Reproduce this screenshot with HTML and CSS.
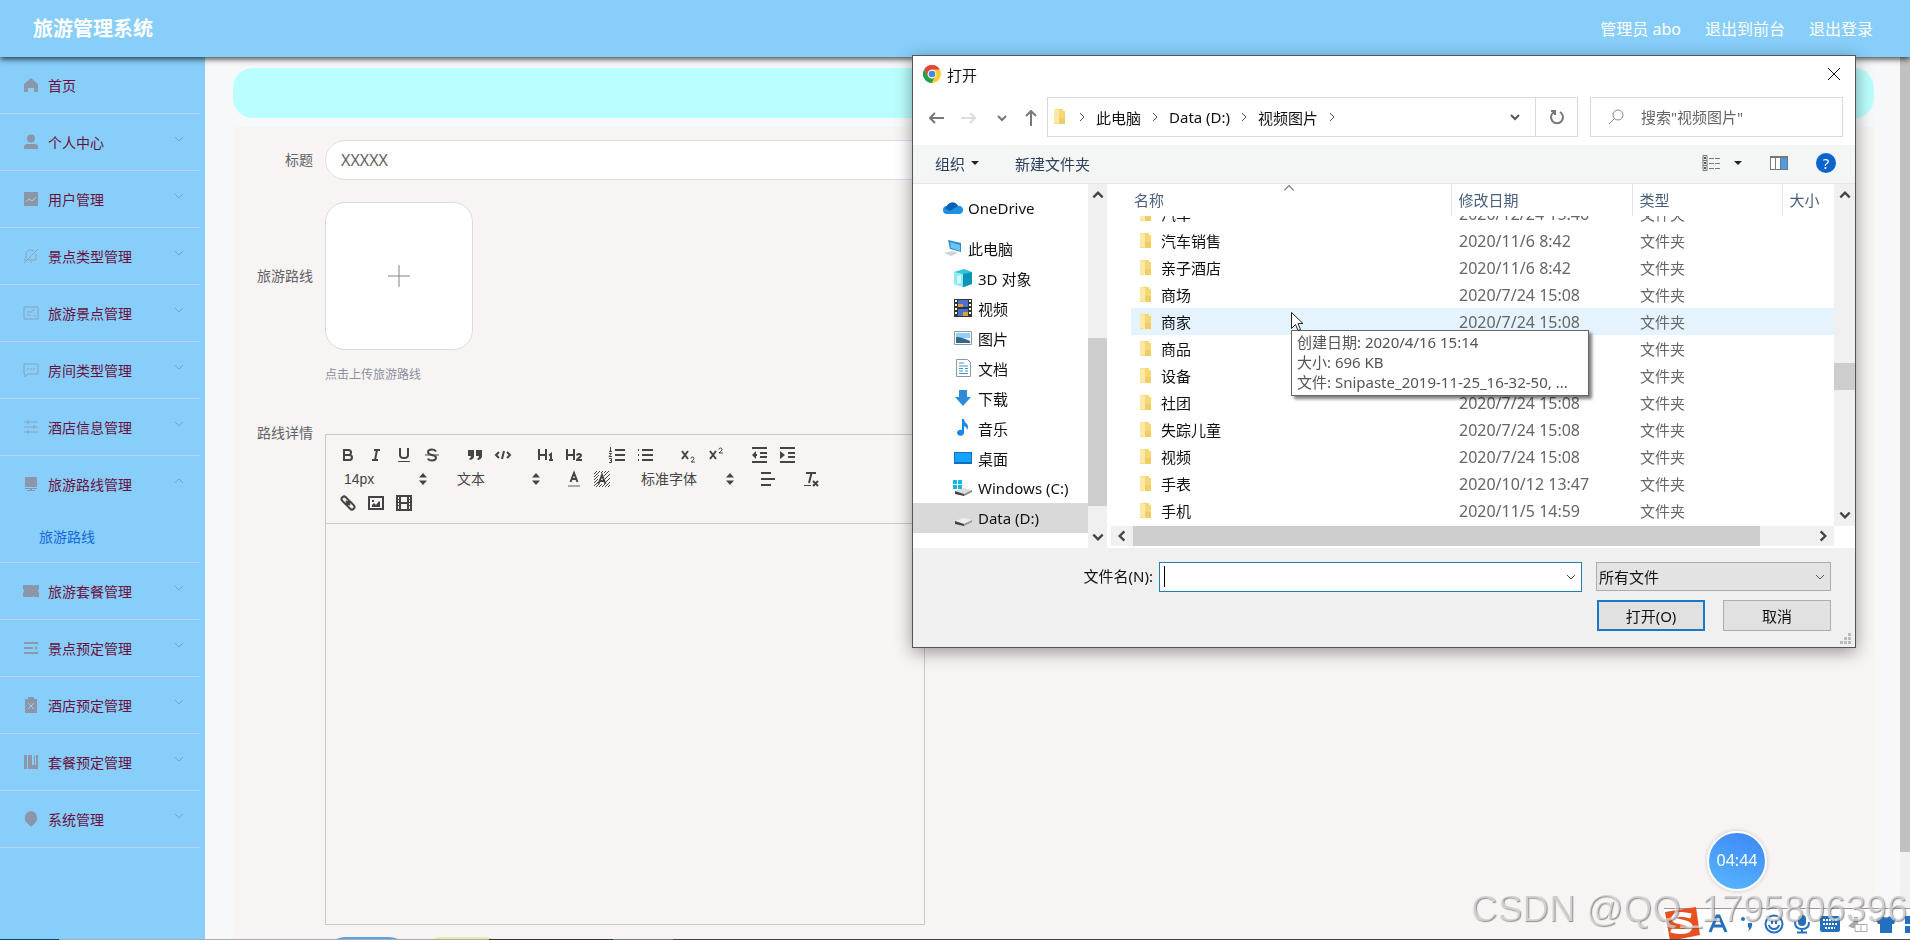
FILE: index.html
```html
<!DOCTYPE html>
<html lang="zh-CN">
<head>
<meta charset="utf-8">
<title>旅游管理系统</title>
<link rel="stylesheet" href="styles.css">
</head>
<body>
<svg class="defs" aria-hidden="true">
  <symbol id="down" viewBox="0 0 12 12"><path d="M2 4l4 4 4-4" fill="none" stroke="currentColor"/></symbol>
  <symbol id="up" viewBox="0 0 12 12"><path d="M2 8l4-4 4 4" fill="none" stroke="currentColor"/></symbol>
  <symbol id="right" viewBox="0 0 12 12"><path d="M4 2l4 4-4 4" fill="none" stroke="currentColor"/></symbol>
  <symbol id="left" viewBox="0 0 12 12"><path d="M8 2L4 6l4 4" fill="none" stroke="currentColor"/></symbol>
  <symbol id="picker" viewBox="0 0 18 18"><path d="M5 7.500L9 3l4 4.500z M5 10.500L9 15l4-4.500z" fill="#444"/></symbol>
  <symbol id="folder" viewBox="0 0 13 18"><path d="M1 1h9v2h2v13H1z" fill="#f7d774"/><path d="M1 1l5 1v14l-5-1z" fill="#fbe9a9"/><path d="M6 10h6v6H6z" fill="#f1cd66"/></symbol>
</svg>

<header class="topbar">
  <h1 class="brand">旅游管理系统</h1>
  <nav class="account"><span>管理员 abo</span><a href="#">退出到前台</a><a href="#">退出登录</a></nav>
</header>

<div class="shell">
  <aside class="sidebar">
    <ul class="menu">
      <li><a href="#"><svg class="mi" viewBox="0 0 16 16"><path d="M8 1l7 6v8h-4v-4H5v4H1V7z"/></svg>首页</a></li>
      <li><a href="#"><svg class="mi" viewBox="0 0 16 16"><circle cx="8" cy="4.500" r="4"/><path d="M1 15v-2q0-3 3-3h8q3 0 3 3v2z"/></svg>个人中心<svg class="arr"><use href="#down"/></svg></a></li>
      <li><a href="#"><svg class="mi" viewBox="0 0 16 16"><path d="M1 1h14v14H1z"/><path class="cut" d="M3 11l3-3 3 2 4-4"/></svg>用户管理<svg class="arr"><use href="#down"/></svg></a></li>
      <li><a href="#"><svg class="mi line" viewBox="0 0 16 16"><path d="M1 15L15 1M3 11V7q0-5 5-5 2 0 3 1M13 6v6H5M1 12h2M7 14h2"/></svg>景点类型管理<svg class="arr"><use href="#down"/></svg></a></li>
      <li><a href="#"><svg class="mi line" viewBox="0 0 16 16"><path d="M1 2h14v12H1zM4 7h5M4 10h4M9 6l3-2M11 11h2"/></svg>旅游景点管理<svg class="arr"><use href="#down"/></svg></a></li>
      <li><a href="#"><svg class="mi line" viewBox="0 0 16 16"><path d="M1 2h14v10H5l-3 3v-3H1zM4 7h2M7 7h2M10 7h2"/></svg>房间类型管理<svg class="arr"><use href="#down"/></svg></a></li>
      <li><a href="#"><svg class="mi line" viewBox="0 0 16 16"><path d="M1 3h14M1 8h14M1 13h14M5 1v4M11 6v4M5 11v4"/></svg>酒店信息管理<svg class="arr"><use href="#down"/></svg></a></li>
      <li><a href="#"><svg class="mi" viewBox="0 0 16 16"><path d="M2 1h12v10H2zM2 12h12v1H9v1h3v1H4v-1h3v-1H2z"/></svg>旅游路线管理<svg class="arr"><use href="#up"/></svg></a>
        <a class="sub" href="#">旅游路线</a></li>
      <li><a href="#"><svg class="mi" viewBox="0 0 16 16"><path d="M0 2h10v1h1V2h5v4q-2 2 0 4v4h-5v-1h-1v1H0v-4q2-2 0-4z"/></svg>旅游套餐管理<svg class="arr"><use href="#down"/></svg></a></li>
      <li><a href="#"><svg class="mi" viewBox="0 0 16 16"><path d="M1 2h14v2H1zM1 7h9v2H1zM1 12h14v2H1zM12 6l3 2-3 2z"/></svg>景点预定管理<svg class="arr"><use href="#down"/></svg></a></li>
      <li><a href="#"><svg class="mi" viewBox="0 0 16 16"><path d="M2 2h3V0h6v2h3v14H2z"/><path class="cut" d="M5 6l6 6M11 6l-6 6"/></svg>酒店预定管理<svg class="arr"><use href="#down"/></svg></a></li>
      <li><a href="#"><svg class="mi" viewBox="0 0 16 16"><path d="M1 1h3v14H1zM5 1h4v10h2V2h1v9h1V1h2v14H5z"/></svg>套餐预定管理<svg class="arr"><use href="#down"/></svg></a></li>
      <li><a href="#"><svg class="mi" viewBox="0 0 16 16"><path d="M8 0a7 7 0 0 1 4 12l-4 4-4-4A7 7 0 0 1 8 0z"/></svg>系统管理<svg class="arr"><use href="#down"/></svg></a></li>
    </ul>
  </aside>

  <main class="content">
    <div class="crumb"></div>
    <form class="panel">
      <div class="field"><label for="title">标题</label><input class="text" id="title" value="XXXXX"></div>
      <div class="field upload-field"><label for="pic">旅游路线</label>
        <div><button class="upload" id="pic" type="button" aria-label="上传"><svg viewBox="0 0 24 24"><path d="M12 1v22M1 12h22" stroke="#7c828c" fill="none"/></svg></button><p class="tip">点击上传旅游路线</p></div>
      </div>
      <div class="field"><span class="label" id="detail">路线详情</span>
        <div class="editor">
          <div class="tools">
            <span class="grp">
              <button type="button" aria-label="粗体"><svg viewBox="0 0 18 18"><path class="s" d="M5 4h4.500a2.500 2.500 0 0 1 0 5H5zM5 9h5.500a2.500 2.500 0 0 1 0 5H5z"/></svg></button>
              <button type="button" aria-label="斜体"><svg viewBox="0 0 18 18"><path class="s" d="M7 4h6M5 14h6M8 14l2-10"/></svg></button>
              <button type="button" aria-label="下划线"><svg viewBox="0 0 18 18"><path class="s" d="M5 2v7c0 2 2 3 4 3s4-1 4-3V2"/><path class="f" d="M3 15h12v1H3z"/></svg></button>
              <button type="button" aria-label="删除线"><svg viewBox="0 0 18 18"><path class="s thin" d="M2 9h14"/><path class="s" d="M13 5.500C12 3.500 10.500 3.500 9 3.500c-2.500 0-4 1-4 2.700C5 8 7 8.500 9 9s4 1 4 2.800c0 1.700-1.500 2.700-4 2.700-2 0-3.500-.5-4-2"/></svg></button>
            </span>
            <span class="grp">
              <button type="button" aria-label="引用"><svg viewBox="0 0 18 18"><path class="f" d="M2 4h6v6q0 3-4 4l-1-1q2-1 2-3H2zM10 4h6v6q0 3-4 4l-1-1q2-1 2-3h-3z"/></svg></button>
              <button type="button" aria-label="代码"><svg viewBox="0 0 18 18"><path class="s" d="M5 6L2 9l3 3M13 6l3 3-3 3M10 5l-2 8"/></svg></button>
            </span>
            <span class="grp">
              <button type="button" aria-label="标题 1"><svg viewBox="0 0 18 18"><path class="s" d="M2 3v11M9 3v11M2 9h7"/><path class="s" d="M12 9.500l2-1.500v6M12 14h4"/></svg></button>
              <button type="button" aria-label="标题 2"><svg viewBox="0 0 18 18"><path class="s" d="M2 3v11M9 3v11M2 9h7M12 9.500c0-2 4-2 4 0 0 1.500-4 3-4 4.500h5"/></svg></button>
            </span>
            <span class="grp">
              <button type="button" aria-label="有序列表"><svg viewBox="0 0 18 18"><path class="s" d="M7 4h10M7 9h10M7 14h10"/><path class="s thin" d="M2.500 1v4M1 5.500h3M1 7.500h2.500L1 10.500h3M1 12.500h2.500v4H1M2 14.500h2"/></svg></button>
              <button type="button" aria-label="无序列表"><svg viewBox="0 0 18 18"><path class="s" d="M6 4h11M6 9h11M6 14h11M2 4h1M2 9h1M2 14h1"/></svg></button>
            </span>
            <span class="grp">
              <button type="button" aria-label="下标"><svg viewBox="0 0 18 18"><path class="s" d="M3 5l6 8M9 5l-6 8"/><path class="s thin" d="M12 12.500q0-1.500 1.500-1.500t1.500 1.500q0 1-3 3.500h4"/></svg></button>
              <button type="button" aria-label="上标"><svg viewBox="0 0 18 18"><path class="s" d="M3 5l6 8M9 5l-6 8"/><path class="s thin" d="M12 3.500Q12 2 13.500 2T15 3.500q0 1-3 3.500h4"/></svg></button>
            </span>
            <span class="grp">
              <button type="button" aria-label="减少缩进"><svg viewBox="0 0 18 18"><path class="s" d="M2 2h15M10 7h7M10 11h7M2 16h15M3 9h4"/><path class="f" d="M6 5v8L2 9z"/></svg></button>
              <button type="button" aria-label="增加缩进"><svg viewBox="0 0 18 18"><path class="s" d="M2 2h15M10 7h7M10 11h7M2 16h15"/><path class="f" d="M2 5v8l5-4z"/></svg></button>
            </span>
            <span class="grp pick"><select aria-label="字号"><option>14px</option></select><svg><use href="#picker"/></svg></span>
            <span class="grp pick"><select aria-label="段落"><option>文本</option></select><svg><use href="#picker"/></svg></span>
            <span class="grp">
              <button type="button" aria-label="文字颜色"><svg viewBox="0 0 18 18"><path class="s" d="M5.500 12L9 3l3.500 9M7 9h4"/><path d="M3 15h12v2H3z" fill="#aaa"/></svg></button>
              <button type="button" aria-label="背景颜色"><svg viewBox="0 0 18 18"><path class="s thin" d="M1 4l3-3M1 7l6-6M1 10l5-5M1 13l4-4M1 16l4-4M3 17l3-3M6 17l3-3M9 17l3-3M12 17l5-5M15 17l2-2M13 12l4-4M12 9l5-5M11 6l5-5M8 3l2-2M11 3l2-2"/><path class="s" d="M5.500 14L9 5l3.500 9M7 11h4"/></svg></button>
            </span>
            <span class="grp pick wide"><select aria-label="字体"><option>标准字体</option></select><svg><use href="#picker"/></svg></span>
            <span class="grp"><button type="button" aria-label="对齐"><svg viewBox="0 0 18 18"><path class="s" d="M2 3h10M2 9h14M2 15h10"/></svg></button></span>
            <span class="grp"><button type="button" aria-label="清除格式"><svg viewBox="0 0 18 18"><path class="s" d="M4 3h10M9.500 3L7 13M11 11l5 5M16 11l-5 5"/><path class="s thin" d="M2 15.500h7"/></svg></button></span>
            <span class="grp">
              <button type="button" aria-label="链接"><svg viewBox="0 0 18 18"><g class="s"><rect x="2" y="4" width="9" height="5" rx="2.500" transform="rotate(45 6.500 6.500)"/><rect x="7" y="9" width="9" height="5" rx="2.500" transform="rotate(45 11.500 11.500)"/><path d="M7 7l4 4"/></g></svg></button>
              <button type="button" aria-label="图片"><svg viewBox="0 0 18 18"><path class="s" d="M2 3h14v12H2z"/><path class="f" d="M5 13v-2l2-2 2 2 3-4 1 1v5zM5 6h2v2H5z"/></svg></button>
              <button type="button" aria-label="视频"><svg viewBox="0 0 18 18"><path class="s" d="M2 2h14v14H2zM5 2v14M13 2v14M5 9h8"/><path class="s thin" d="M2 5.500h3M2 8.500h3M2 11.500h3M13 5.500h3M13 8.500h3M13 11.500h3"/></svg></button>
            </span>
          </div>
          <div class="page" contenteditable="true" role="textbox" aria-labelledby="detail"></div>
        </div>
      </div>
      <div class="actions"><button type="button" class="ok" aria-label="提交"></button><button type="button" class="back" aria-label="返回"></button></div>
    </form>
  </main>
  <div class="vbar"><div class="vthumb"></div></div>
</div>

<section class="dialog" role="dialog" aria-label="打开">
  <div class="titlebar">
    <svg class="chrome" viewBox="0 0 18 18"><circle cx="9" cy="9" r="9" fill="#fc3"/><path d="M1.200 4.500A9 9 0 0 1 16.800 4.500H9a4.500 4.500 0 0 0-4 6.500z" fill="#e0443a"/><path d="M1.200 4.500L5 11.200A4.500 4.500 0 0 0 11 13l-2 5A9 9 0 0 1 1.200 4.500z" fill="#1fa055"/><circle cx="9" cy="9" r="4.200" fill="#fff"/><circle cx="9" cy="9" r="3.300" fill="#4a86e8"/></svg>
    <span>打开</span>
    <button class="close" type="button" aria-label="关闭"><svg viewBox="0 0 14 14"><path d="M1 1l12 12M13 1L1 13" stroke="#111" fill="none"/></svg></button>
  </div>
  <div class="address">
    <div class="navbtns">
      <button type="button" aria-label="后退"><svg viewBox="0 0 16 16"><path d="M15 8H1M6 3L1 8l5 5"/></svg></button>
      <button type="button" class="dim" aria-label="前进"><svg viewBox="0 0 16 16"><path d="M1 8h14M10 3l5 5-5 5"/></svg></button>
      <button type="button" class="small" aria-label="历史"><svg viewBox="0 0 12 12"><use href="#down"/></svg></button>
      <button type="button" aria-label="上移"><svg viewBox="0 0 16 16"><path d="M8 16V1M3 6l5-5 5 5"/></svg></button>
    </div>
    <div class="path">
      <svg class="fold"><use href="#folder"/></svg>
      <svg class="sep first"><use href="#right"/></svg><span>此电脑</span>
      <svg class="sep"><use href="#right"/></svg><span>Data (D:)</span>
      <svg class="sep"><use href="#right"/></svg><span>视频图片</span>
      <svg class="sep"><use href="#right"/></svg>
      <svg class="sep last"><use href="#down"/></svg>
      <button type="button" class="refresh" aria-label="刷新"><svg viewBox="0 0 16 16"><path d="M5 3a6 6 0 1 0 6 0M2 2h4v4" fill="none" stroke="#777" stroke-width="2"/></svg></button>
    </div>
    <div class="search"><svg viewBox="0 0 16 16"><circle cx="10" cy="6" r="5"/><path d="M6.500 9.500L1 15"/></svg><input aria-label="搜索" placeholder='搜索"视频图片"'></div>
  </div>
  <div class="commands">
    <button type="button">组织 <svg class="tri" viewBox="0 0 8 4"><path d="M0 0h8L4 4z"/></svg></button>
    <button type="button">新建文件夹</button>
    <span class="right">
      <button type="button" aria-label="视图"><svg width="19" height="16" viewBox="0 0 19 16"><path d="M1 .5h4v15H1zM1 5.500h4M1 10.500h4M7 3.500h5M13 3.500h5M7 8.500h5M13 8.500h5M7 13.500h5M13 13.500h5" fill="none" stroke="#777"/><path d="M2 2h2v2H2zM2 7h2v2H2zM2 12h2v2H2z" fill="#555"/></svg><svg class="tri" viewBox="0 0 8 4"><path d="M0 0h8L4 4z"/></svg></button>
      <button type="button" aria-label="预览窗格"><svg width="18" height="14" viewBox="0 0 18 14"><path d="M0 0h18v14H0z" fill="#777"/><path d="M1 2h4v11H1zM6 2h4v11H6z" fill="#fff"/><path d="M11 2h6v11h-6z" fill="#4a9be8"/></svg></button>
      <button type="button" class="help" aria-label="帮助">?</button>
    </span>
  </div>
  <div class="browse">
    <ul class="tree">
      <li class="root gap"><svg viewBox="0 0 20 18"><path d="M4 15a4 4 0 0 1 0-8 6 6 0 0 1 11 0 4 4 0 0 1 2 8z" fill="#1e90e4"/><path d="M4 7a6 6 0 0 1 11 0l-8 5-5-3z" fill="#0c5fb3"/></svg>OneDrive</li>
      <li class="root"><svg viewBox="0 0 20 18"><path d="M5 1l13 3v9L7 10z" fill="#2e8bd0"/><path d="M7 3l10 3v6L8 9z" fill="#6fc3f5"/><path d="M1 14l8-2 6 2-7 3z" fill="#cfd3d8"/></svg>此电脑</li>
      <li><svg viewBox="0 0 20 18"><path d="M1 3l10-3 8 3v12l-8 3-10-3z" fill="#35c3dc"/><path d="M1 3l9 2v13l-9-3z" fill="#8ceaf2"/><path d="M10 5l9-2v12l-9 3z" fill="#0b93b8"/><path d="M4 7l4-1v8l-4 1z" fill="#fff" opacity=".6"/></svg>3D 对象</li>
      <li><svg viewBox="0 0 20 18"><path d="M1 0h18v18H1z" fill="#333"/><path d="M5 1h10v7H5zM5 10h10v7H5z" fill="#4a71cf"/><path d="M5 5h5v3H5zM10 13h5v4h-5z" fill="#d8a437"/><path d="M2 1h2v2H2zM2 5h2v2H2zM2 9h2v2H2zM2 13h2v2H2zM16 1h2v2h-2zM16 5h2v2h-2zM16 9h2v2h-2zM16 13h2v2h-2z" fill="#fff"/></svg>视频</li>
      <li><svg viewBox="0 0 20 18"><path d="M1.500 2.500h17v13h-17z" fill="#fff" stroke="#8a99a8"/><path d="M3 4h14v5H3z" fill="#8ed0f8"/><path d="M3 8q6 0 14 4v2H3z" fill="#35678c"/></svg>图片</li>
      <li><svg viewBox="0 0 20 18"><path d="M3.500.5h11l3 3v14h-14z" fill="#fff" stroke="#8a99a8"/><path d="M6 4h5M6 7h9M6 9.500h4M12 9.500h3M6 12h4M12 12h3M6 14.500h9" stroke="#3f97c8" fill="none"/></svg>文档</li>
      <li><svg viewBox="0 0 20 18"><path d="M6 1h8v7h4l-8 9-8-9h4z" fill="#2f8ad8"/></svg>下载</li>
      <li><svg viewBox="0 0 20 18"><path d="M9 0h2q0 3 3 5 2 3 0 6 0-3-3-4v7a3.500 3 0 1 1-2-3z" fill="#1889e8"/></svg>音乐</li>
      <li><svg viewBox="0 0 20 18"><path d="M1 3h18v12H1z" fill="#0b6fc2"/><path d="M2 4h16v9H2z" fill="#16a2fb"/></svg>桌面</li>
      <li><svg viewBox="0 0 20 18"><path d="M0 1h4v4H0zM5 1h4v4H5zM0 6h4v4H0zM5 6h4v4H5z" fill="#18b4e8"/><path d="M2 12l9-3 8 2-8 4z" fill="#ddd"/><path d="M2 12l9 3v2l-9-2z" fill="#444"/><path d="M11 15l8-4v2l-8 4z" fill="#888"/></svg>Windows (C:)</li>
      <li class="on"><svg viewBox="0 0 20 18"><path d="M2 12l9-3 8 2-8 4z" fill="#eee"/><path d="M2 12l9 3v2l-9-2z" fill="#444"/><path d="M11 15l8-4v2l-8 4z" fill="#999"/></svg>Data (D:)</li>
    </ul>
    <div class="bar tree-bar"><svg><use href="#up"/></svg><div class="track"><i></i></div><svg><use href="#down"/></svg></div>
    <div class="files">
      <svg class="sort"><use href="#up"/></svg>
      <table class="head"><thead><tr><th class="c1">名称</th><th class="c2">修改日期</th><th class="c3">类型</th><th>大小</th></tr></thead></table>
      <div class="rows">
        <table>
          <colgroup><col class="c1"><col class="c2"><col class="c3"><col></colgroup>
          <tbody>
          <tr><td><svg><use href="#folder"/></svg>汽车</td><td>2020/12/24 15:46</td><td>文件夹</td><td></td></tr>
          <tr><td><svg><use href="#folder"/></svg>汽车销售</td><td>2020/11/6 8:42</td><td>文件夹</td><td></td></tr>
          <tr><td><svg><use href="#folder"/></svg>亲子酒店</td><td>2020/11/6 8:42</td><td>文件夹</td><td></td></tr>
          <tr><td><svg><use href="#folder"/></svg>商场</td><td>2020/7/24 15:08</td><td>文件夹</td><td></td></tr>
          <tr class="hover"><td><svg><use href="#folder"/></svg>商家</td><td>2020/7/24 15:08</td><td>文件夹</td><td></td></tr>
          <tr><td><svg><use href="#folder"/></svg>商品</td><td></td><td>文件夹</td><td></td></tr>
          <tr><td><svg><use href="#folder"/></svg>设备</td><td></td><td>文件夹</td><td></td></tr>
          <tr><td><svg><use href="#folder"/></svg>社团</td><td>2020/7/24 15:08</td><td>文件夹</td><td></td></tr>
          <tr><td><svg><use href="#folder"/></svg>失踪儿童</td><td>2020/7/24 15:08</td><td>文件夹</td><td></td></tr>
          <tr><td><svg><use href="#folder"/></svg>视频</td><td>2020/7/24 15:08</td><td>文件夹</td><td></td></tr>
          <tr><td><svg><use href="#folder"/></svg>手表</td><td>2020/10/12 13:47</td><td>文件夹</td><td></td></tr>
          <tr><td><svg><use href="#folder"/></svg>手机</td><td>2020/11/5 14:59</td><td>文件夹</td><td></td></tr>
          </tbody>
        </table>
      </div>
      <div class="hbar"><svg><use href="#left"/></svg><div class="htrack"><i></i></div><svg><use href="#right"/></svg></div>
    </div>
    <div class="bar file-bar"><svg><use href="#up"/></svg><div class="track"><i></i></div><svg><use href="#down"/></svg></div>
  </div>
  <div class="foot">
    <label for="fname">文件名(N):</label>
    <div class="combo name"><input id="fname" autofocus><i class="caret"></i><svg><use href="#down"/></svg></div>
    <div class="combo type"><select aria-label="文件类型"><option>所有文件</option></select><svg><use href="#down"/></svg></div>
    <div class="btns"><button type="button" class="primary">打开(O)</button><button type="button">取消</button></div>
  </div>
  <svg class="grip" viewBox="0 0 12 12"><path d="M8 0h3v3H8zM4 4h3v3H4zM8 4h3v3H8zM0 8h3v3H0zM4 8h3v3H4zM8 8h3v3H8z" fill="#bbb"/></svg>
  <div class="hint" role="tooltip">创建日期: 2020/4/16 15:14<br>大小: 696 KB<br>文件: Snipaste_2019-11-25_16-32-50, ...</div>
  <svg class="cursor" viewBox="0 0 12 20"><path d="M.5.5v16l4-4 2.500 6 2.500-1-2.500-6h5z" fill="#fff" stroke="#222"/></svg>
</section>

<div class="timer">04:44</div>
<div class="ime">
  <svg class="sogou" viewBox="0 0 36 34"><path d="M1 5l31-5 4 28-30 6z" fill="#e9501f"/><path d="M27 9Q12 5 10 11c-1 5 17 3 16 9s-14 5-19 3" fill="none" stroke="#fff" stroke-width="5"/></svg>
  <svg viewBox="0 0 20 20"><path d="M2 18L9 2h2l7 16M5 12h10" fill="none" stroke="#2470c0" stroke-width="3"/></svg>
  <svg viewBox="0 0 20 20"><circle cx="7" cy="5" r="2"/><path d="M12 9h4q1 5-4 8 2-3 0-4z"/></svg>
  <svg viewBox="0 0 20 20"><circle cx="10" cy="10" r="8.500" fill="none" stroke="#2470c0" stroke-width="2"/><path d="M7 6h2v4H7zM11 6h2v4h-2zM4 11h2q1 3 4 3t4-3h2q-1 5-6 5t-6-5z"/></svg>
  <svg viewBox="0 0 20 20"><rect x="6" y="1" width="8" height="11" rx="4"/><path d="M3 8q0 7 7 7t7-7M10 15v3M5 18.500h10" fill="none" stroke="#2470c0" stroke-width="2"/></svg>
  <svg viewBox="0 0 20 20"><rect y="2" width="20" height="16" rx="2"/><path d="M3 6h14M3 10h14M5 14h10" stroke="#fff" stroke-width="2" stroke-dasharray="2 1"/></svg>
  <svg viewBox="0 0 20 20"><path d="M0 12l6-5v-4h4v11H4z" fill="#aaa"/><path d="M7 10.500h12v7H7zM13 10v8" fill="#fff" stroke="#aaa"/></svg>
  <svg viewBox="0 0 20 20"><path d="M0 5l6-3q4 3 8 0l6 3-2 5h-2v9H4v-9H2z"/></svg>
  <svg viewBox="0 0 20 20"><path d="M1 2h8v8H1zM11 2h8v8h-8zM1 12h8v7H1zM11 12h8v7h-8z"/></svg>
</div>
<div class="mark">CSDN @QQ_1795806396</div>
<div class="edge"></div>
</body>
</html>
```

FILE: styles.css
```css
* { box-sizing: border-box; }
body {
  margin: 0;
  height: 100vh;
  overflow: hidden;
  display: flex;
  flex-direction: column;
  background: #f6f8fa;
  font: 14px "Noto Sans", "Noto Sans CJK SC", sans-serif;
  color: #606266;
}
button, input, select { font: inherit; color: inherit; border: 0; background: none; padding: 0; margin: 0; outline: 0; }
select { appearance: none; }
ul { list-style: none; margin: 0; padding: 0; }
a { color: inherit; text-decoration: none; }
svg { flex: none; display: block; }
.defs { position: absolute; width: 0; height: 0; }

.topbar {
  position: relative;
  z-index: 1;
  flex: none;
  height: 57px;
  padding: 0 37px 2px 33px;
  display: flex;
  align-items: center;
  justify-content: space-between;
  background: #87cefa;
  box-shadow: 0 2px 6px rgba(0, 0, 0, .75);
  color: #fff;
}
.brand { margin: 0; font-size: 20px; font-weight: 700; }
.account { display: flex; gap: 24px; font-size: 16px; }

.shell { flex: 1; min-height: 0; display: flex; overflow: hidden; }
.sidebar { flex: none; width: 205px; padding-right: 5px; background: #87cefa; }
.menu li { border-bottom: 1px solid #b4d6f2; }
.menu a { display: flex; align-items: center; height: 56px; padding: 0 15px 0 23px; color: #6a1040; }
.menu .mi { width: 16px; height: 16px; margin-right: 9px; fill: #8b97a8; }
.menu .line { fill: none; stroke: #86a3ba; }
.menu .cut { fill: none; stroke: #a9cbe6; }
.menu .arr { width: 12px; height: 12px; margin: 0 0 6px auto; color: #71a5cc; }
.menu .sub { height: 50px; padding: 0 0 0 39px; color: #1668dc; align-items: flex-start; line-height: 49px; }

.content { flex: 1; min-width: 0; padding: 11px 26px 0 28px; overflow: hidden; }
.crumb { height: 50px; border-radius: 20px; background: #baffff; }
.panel { margin-top: 9px; padding-top: 13px; background: #f9f4f4; min-height: 100%; }
.field { display: flex; align-items: flex-start; margin-bottom: 22px; }
.field label, .label { flex: none; width: 80px; margin-right: 12px; text-align: right; line-height: 40px; }
.text { flex: 1; height: 40px; margin-right: 400px; padding: 0 15px; border: 1px solid #dcdfe6; border-radius: 20px; background: #fff; font-size: 16px; }
.upload-field { margin-bottom: 26px; }
.field.upload-field label { line-height: 148px; }
.upload { display: grid; place-items: center; width: 148px; height: 148px; border: 1px solid #dcdcdc; border-radius: 20px; background: #fff; }
.upload svg { width: 24px; }
.tip { margin: 13px 0 0; line-height: 24px; font-size: 12px; color: #8a8e9c; }

.editor { width: 600px; margin-top: 21px; border: 1px solid #ccc6c8; }
.tools { display: flex; flex-wrap: wrap; padding: 8px; border-bottom: 1px solid #ccc6c8; }
.grp { display: flex; height: 24px; margin-right: 15px; }
.grp button { width: 28px; height: 24px; padding: 3px 5px; }
.grp svg { width: 18px; height: 18px; }
.s { fill: none; stroke: #444; stroke-width: 2; }
.thin { stroke-width: 1; }
.f { fill: #444; }
.pick { width: 98px; align-items: center; }
.pick select { flex: 1; min-width: 0; padding-left: 10px; font-family: "Liberation Sans", "Noto Sans CJK SC", sans-serif; color: #444; }
.pick.wide { width: 108px; }
.page { height: 400px; outline: 0; }
.actions { display: flex; gap: 12px; margin-top: -10px; padding-left: 92px; }
.actions button { width: 84px; height: 40px; border-radius: 20px; }
.ok { background: #5ba4e6; }
.back { background: #e6eda8; }
.actions .ok { background: #5ba4e6; }
.actions .back { background: #e6eda8; }
.vbar { flex: none; width: 10px; background: #f1f1f1; }
.vthumb { height: 90%; background: #c1c1c1; }

.dialog {
  position: fixed;
  z-index: 2;
  left: 912px;
  top: 55px;
  width: 944px;
  border: 1px solid #50565c;
  background: #fff;
  box-shadow: 0 4px 16px rgba(0, 0, 0, .4);
  font-size: 15px;
  color: #111;
}
.titlebar { display: flex; align-items: center; gap: 6px; height: 38px; padding: 0 14px 2px 10px; }
.chrome { width: 18px; height: 18px; }
.close { margin-left: auto; }
.close svg { width: 14px; }
.address { display: flex; align-items: center; height: 51px; padding: 0 12px 5px 0; }
.navbtns { display: flex; align-items: center; justify-content: space-between; width: 134px; padding: 2px 8px 0 16px; }
.navbtns svg { width: 16px; height: 16px; fill: none; stroke: #777; stroke-width: 2; color: #777; }
.navbtns .dim svg { stroke: #ddd; }
.navbtns .small { margin-left: 6px; }
.navbtns .small svg { width: 12px; }
.path { display: flex; align-items: center; flex: 1; height: 40px; border: 1px solid #d9d9d9; padding-left: 5px; }
.fold { width: 13px; height: 18px; margin-right: 10px; }
.sep { width: 12px; height: 12px; margin: 0 8px; color: #555; }
.sep.first { margin-left: 0; }
.sep.last { margin: 0 14px 0 auto; stroke-width: 2; }
.refresh { display: grid; place-items: center; width: 42px; height: 38px; border-left: 1px solid #d9d9d9; }
.refresh svg { width: 16px; }
.search { display: flex; align-items: center; gap: 17px; width: 253px; height: 40px; margin-left: 12px; padding-left: 17px; border: 1px solid #d9d9d9; }
.search svg { width: 16px; fill: none; stroke: #888; }
.search input { flex: 1; min-width: 0; }
.search input::placeholder { color: #666; opacity: 1; }
.commands { display: flex; align-items: center; gap: 36px; height: 39px; padding: 0 19px 2px 22px; background: #f4f6f6; border-bottom: 1px solid #e4e6e8; color: #2c3e5a; }
.commands button { display: flex; align-items: center; gap: 6px; }
.tri { width: 8px; height: 4px; fill: #222; }
.right { display: flex; align-items: center; gap: 28px; margin-left: auto; }
.right button { gap: 13px; }
.commands .help { justify-content: center; width: 20px; height: 20px; border-radius: 50%; background: #0b63ce; color: #fff; line-height: 20px; }

.browse { display: flex; height: 364px; }
.tree { flex: none; width: 175px; padding-top: 9px; }
.tree li { display: flex; align-items: center; gap: 5px; height: 30px; padding-left: 40px; white-space: nowrap; }
.tree .root { padding-left: 30px; }
.tree .gap { margin-bottom: 10px; }
.tree .on { background: #d9d9d9; }
.tree svg { width: 20px; height: 18px; }
.bar { flex: none; display: flex; flex-direction: column; align-items: center; justify-content: space-between; width: 19px; padding: 4px 0; background: #f0f0f0; }
.bar svg, .hbar svg { width: 14px; height: 14px; color: #444; stroke-width: 2; }
.track { flex: 1; width: 100%; display: flex; flex-direction: column; }
.track i { height: 168px; margin-top: 136px; background: #cdcdcd; }
.files { position: relative; flex: 1; min-width: 0; padding-left: 4px; display: flex; flex-direction: column; }
.sort { position: absolute; left: 175px; top: -3px; width: 14px; height: 14px; color: #777; }
.files table { width: 100%; table-layout: fixed; border-collapse: collapse; }
.files .head { margin-left: 20px; width: calc(100% - 20px); }
.head th { height: 32px; padding: 0 0 2px 7px; text-align: left; font-weight: 400; color: #4a5f7c; border-right: 1px solid #e5e5e5; }
.head th:first-child { padding-left: 3px; }
.head th:last-child { border: 0; }
.c1 { width: 320px; }
.c2 { width: 181px; }
.c3 { width: 150px; }
.rows { height: 310px; padding-left: 20px; overflow: hidden; }
.rows table { margin-top: -16px; }
.rows td { height: 27px; padding: 0 0 0 8px; line-height: 26px; color: #666; white-space: nowrap; }
.rows td:first-child { display: flex; align-items: center; gap: 9px; padding-left: 8px; color: #111; }
.rows td svg { width: 13px; height: 18px; }
.rows td:nth-child(2) { font-size: 16px; }
.hover { background: #e5f3ff; }
.hbar { display: flex; align-items: center; height: 20px; padding: 0 4px; background: #f0f0f0; }
.htrack { flex: 1; height: 100%; padding: 0 56px 0 4px; display: flex; }
.htrack i { flex: 1; background: #cdcdcd; }
.file-bar { width: 21px; height: 342px; }
.file-bar .track i { height: 27px; margin-top: 161px; }

.foot { display: grid; grid-template-columns: 240px 423px 243px; column-gap: 6px; row-gap: 8px; padding: 14px 22px 16px 0; background: #f0f0f0; }
.foot label { text-align: right; line-height: 28px; }
.combo { display: flex; align-items: center; height: 30px; padding: 0 4px; border: 1px solid #adadad; background: #fff; }
.combo input, .combo select { flex: 1; min-width: 0; height: 100%; }
.combo svg { width: 12px; height: 12px; color: #555; }
.combo.name { position: relative; border-color: #1e7fb0; }
.caret { position: absolute; left: 4px; top: 3px; width: 1px; height: 21px; background: #000; }
.name input { caret-color: transparent; }
.combo.type { margin-left: 8px; height: 29px; padding-left: 2px; background: #e3e3e3; }
.btns { grid-column: 3; display: flex; justify-content: space-between; padding-left: 9px; }
.btns button { width: 108px; height: 31px; border: 1px solid #adadad; background: #e1e1e1; }
.btns .primary { border: 2px solid #1a78c8; }
.grip { position: absolute; right: 3px; bottom: 2px; width: 12px; height: 12px; }
.hint { position: absolute; left: 378px; top: 274px; min-width: 298px; padding: 1px 5px 3px; border: 1px solid #666; background: #fff; box-shadow: 3px 3px 3px rgba(0, 0, 0, .5); line-height: 20px; color: #555; white-space: nowrap; }
.cursor { position: absolute; left: 378px; top: 256px; width: 12px; height: 20px; }

.timer { position: fixed; z-index: 2; right: 143px; bottom: 49px; width: 60px; height: 60px; border: 2px solid #fff; border-radius: 50%; background: linear-gradient(20deg, #58b8ff, #3d86f4); box-shadow: 0 0 4px rgba(0, 0, 0, .2); color: #fff; font-size: 16px; line-height: 55px; text-align: center; }
.ime { position: fixed; z-index: 2; right: -14px; bottom: 1px; display: flex; align-items: center; gap: 8px; height: 31px; border-top: 1px solid #999; background: #fff; }
.ime svg { width: 20px; height: 20px; fill: #2470c0; }
.ime .sogou { width: 36px; height: 34px; }
.mark { position: fixed; z-index: 3; right: 3px; bottom: 9px; font: 37px/44px "Liberation Sans", sans-serif; color: rgba(255, 255, 255, .55); text-shadow: 1px 1px 1px rgba(90, 90, 90, .65); white-space: nowrap; }
.edge { position: fixed; z-index: 4; left: 0; right: 0; bottom: 0; height: 1px; background: linear-gradient(90deg, #124468 59px, #aaa 59px 489px, #333 489px 613px, #777 613px 673px, #444 673px); }
```
